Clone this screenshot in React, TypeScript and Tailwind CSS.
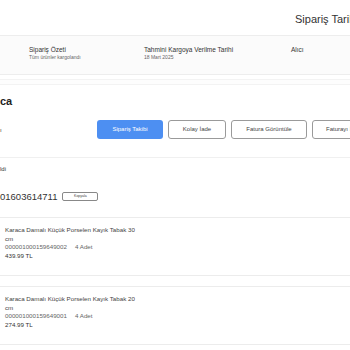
import React from "react";

const font = { fontFamily: '"Liberation Sans", Arial, sans-serif' };

function Item({ title, code, price }: { title: string; code: string; price: string }) {
  return (
    <div className="h-[59px] border-y border-[#ececec] pl-[5px] pt-[8px] text-[6.2px] leading-[8.5px] text-[#444]">
      <div>{title}</div>
      <div>cm</div>
      <div className="flex gap-[8px] text-[#666]">
        <span>{code}</span>
        <span>4 Adet</span>
      </div>
      <div className="text-[#333]">{price}</div>
    </div>
  );
}

export default function App() {
  return (
    <div className="w-[350px] h-[350px] overflow-hidden bg-white text-[#333]" style={font}>
      <div className="h-[35px] pl-[295px] pt-[12px] text-[11px] leading-[14px] whitespace-nowrap text-[#333]">
        Sipariş Tarihi
      </div>
      <div className="h-[40px] border-y border-[#ededed] bg-[#fbfbfb] flex whitespace-nowrap pt-[10px]">
        <div className="w-[144px] shrink-0 pl-[29px]">
          <div className="text-[6.5px] leading-[8px] text-[#333]">Sipariş Özeti</div>
          <div className="text-[5px] leading-[6px] text-[#666]">Tüm ürünler kargolandı</div>
        </div>
        <div className="w-[147px] shrink-0">
          <div className="text-[6.5px] leading-[8px] text-[#333]">Tahmini Kargoya Verilme Tarihi</div>
          <div className="text-[5px] leading-[6px] text-[#666]">18 Mart 2025</div>
        </div>
        <div className="shrink-0">
          <div className="text-[6.5px] leading-[8px] text-[#333]">Alıcı</div>
        </div>
      </div>
      <div className="mt-[4px] h-[6px] border-y border-[#f3f3f3] bg-[#fdfdfd]" />
      <div className="h-[35px] pt-[9px] text-[11px] leading-[14px] font-bold text-[#222]">ca</div>
      <div className="h-[38px] border-b border-[#f0f0f0] flex items-start whitespace-nowrap">
        <div className="w-[97px] shrink-0 pt-[6px] text-[6px] leading-[8px] text-[#444]">ı</div>
        <div className="flex gap-[5px] shrink-0">
          <div className="w-[66px] h-[19px] shrink-0 rounded-[3px] bg-[#4d8ff2] text-white text-[6px] flex items-center justify-center">Sipariş Takibi</div>
          <div className="w-[58px] h-[19px] shrink-0 rounded-[3px] border border-[#9a9a9a] text-[#444] text-[6px] flex items-center justify-center">Kolay İade</div>
          <div className="w-[76px] h-[19px] shrink-0 rounded-[3px] border border-[#9a9a9a] text-[#444] text-[6px] flex items-center justify-center">Fatura Görüntüle</div>
          <div className="w-[76px] h-[19px] shrink-0 rounded-[3px] border border-[#9a9a9a] text-[#444] text-[6px] flex items-center pl-[13px]">Faturayı İndir</div>
        </div>
      </div>
      <div className="h-[22px] pt-[7px] text-[6px] leading-[8px] text-[#333]">ldi</div>
      <div className="h-[37px] flex items-start gap-[5px] pt-[11px] whitespace-nowrap">
        <span className="text-[9.5px] leading-[12px] text-[#333]">01603614711</span>
        <span className="mt-[1px] w-[36px] h-[9px] rounded-[2px] border border-[#888] text-[3.5px] flex items-center justify-center text-[#444]">Kopyala</span>
      </div>
      <Item title="Karaca Damalı Küçük Porselen Kayık Tabak 30" code="000001000159649002" price="439.99 TL" />
      <div className="h-[10px]" />
      <Item title="Karaca Damalı Küçük Porselen Kayık Tabak 20" code="000001000159649001" price="274.99 TL" />
      <div className="h-[6px]" />
      <div className="h-[40px] border-t border-[#ececec]" />
    </div>
  );
}
